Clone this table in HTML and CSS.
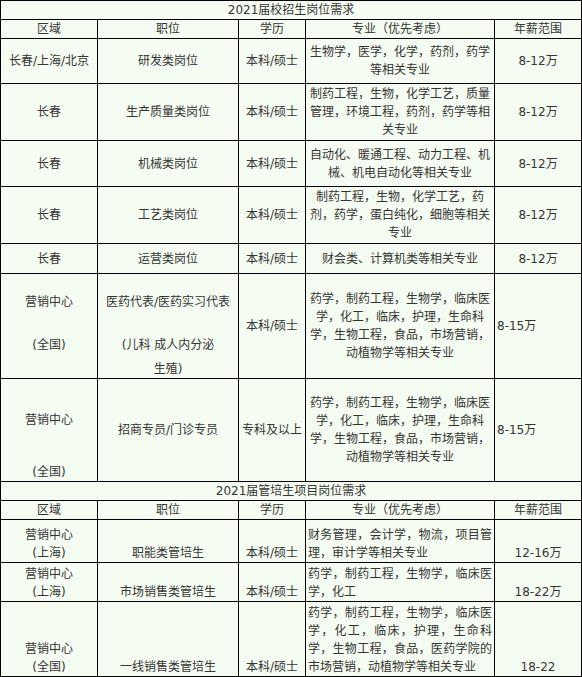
FILE: index.html
```html
<!DOCTYPE html>
<html lang="zh-CN">
<head>
<meta charset="utf-8">
<title>2021届校招生岗位需求</title>
<link rel="stylesheet" href="styles.css">
</head>
<body>
<table class="jobs">
  <colgroup>
    <col class="c-area">
    <col class="c-pos">
    <col class="c-edu">
    <col class="c-major">
    <col class="c-pay">
  </colgroup>
  <tbody>
    <tr class="h19"><td colspan="5" class="title">2021届校招生岗位需求</td></tr>
    <tr class="h19">
      <td>区域</td><td>职位</td><td>学历</td><td>专业（优先考虑）</td><td>年薪范围</td>
    </tr>
    <tr class="h45">
      <td>长春/上海/北京</td><td>研发类岗位</td><td>本科/硕士</td>
      <td>生物学，医学，化学，药剂，药学<br>等相关专业</td><td>8-12万</td>
    </tr>
    <tr class="h57">
      <td>长春</td><td>生产质量类岗位</td><td>本科/硕士</td>
      <td>制药工程，生物，化学工艺，质量<br>管理，环境工程，药剂，药学等相<br>关专业</td><td>8-12万</td>
    </tr>
    <tr class="h46">
      <td>长春</td><td>机械类岗位</td><td>本科/硕士</td>
      <td>自动化、暖通工程、动力工程、机<br>械、机电自动化等相关专业</td><td>8-12万</td>
    </tr>
    <tr class="h57">
      <td>长春</td><td>工艺类岗位</td><td>本科/硕士</td>
      <td>制药工程，生物，化学工艺，药<br>剂，药学，蛋白纯化，细胞等相关<br>专业</td><td>8-12万</td>
    </tr>
    <tr class="h30">
      <td>长春</td><td>运营类岗位</td><td>本科/硕士</td>
      <td>财会类、计算机类等相关专业</td><td>8-12万</td>
    </tr>
    <tr class="h105">
      <td class="top"><div class="l r6a">营销中心</div><div class="l r6b">(全国)</div></td>
      <td class="top"><div class="l r6a">医药代表/医药实习代表</div><div class="l r6b">(儿科 成人内分泌</div><div class="l r6c">生殖)</div></td>
      <td>本科/硕士</td>
      <td>药学，制药工程，生物学，临床医<br>学，化工，临床，护理，生命科<br>学，生物工程，食品，市场营销，<br>动植物学等相关专业</td>
      <td class="left">8-15万</td>
    </tr>
    <tr class="h103">
      <td class="top"><div class="l r7a">营销中心</div><div class="l r7b">(全国)</div></td>
      <td>招商专员/门诊专员</td>
      <td>专科及以上</td>
      <td>药学，制药工程，生物学，临床医<br>学，化工，临床，护理，生命科<br>学，生物工程，食品，市场营销，<br>动植物学等相关专业</td>
      <td class="left">8-15万</td>
    </tr>
    <tr class="h19"><td colspan="5" class="title">2021届管培生项目岗位需求</td></tr>
    <tr class="h19">
      <td>区域</td><td>职位</td><td>学历</td><td>专业（优先考虑）</td><td>年薪范围</td>
    </tr>
    <tr class="h43 bottom">
      <td>营销中心<br>(上海)</td><td>职能类管培生</td><td>本科/硕士</td>
      <td class="just"><span class="jl">财务管理，会计学，物流，项目管</span>理，审计学等相关专业</td>
      <td>12-16万</td>
    </tr>
    <tr class="h39 bottom">
      <td>营销中心<br>(上海)</td><td>市场销售类管培生</td><td>本科/硕士</td>
      <td class="just"><span class="jl">药学，制药工程，生物学，临床医</span>学，化工</td>
      <td>18-22万</td>
    </tr>
    <tr class="h75 bottom">
      <td>营销中心<br>(全国)</td><td>一线销售类管培生</td><td>本科/硕士</td>
      <td class="just"><span class="jl">药学，制药工程，生物学，临床医</span><span class="jl">学，化工，临床，护理，生命科</span><span class="jl">学，生物工程，食品，医药学院的</span>市场营销，动植物学等相关专业</td>
      <td>18-22</td>
    </tr>
  </tbody>
</table>
</body>
</html>
```

FILE: styles.css
```css
html, body {
  margin: 0;
  padding: 0;
  background: #f5fcf1;
}

.jobs {
  border-collapse: collapse;
  table-layout: fixed;
  width: 581px;
  background: #f5fcf1;
  color: #353535;
  font-family: "DejaVu Sans", "Noto Sans CJK SC", sans-serif;
  font-size: 12px;
  line-height: 18px;
}

.c-area { width: 97px; }
.c-pos { width: 141px; }
.c-edu { width: 67px; }
.c-major { width: 189px; }
.c-pay { width: 87px; }

.jobs td {
  border: 1px solid #000;
  padding: 0 2px;
  text-align: center;
  vertical-align: middle;
  white-space: nowrap;
  overflow: hidden;
}

.h19 { height: 19px; }
.h30 { height: 30px; }
.h39 { height: 39px; }
.h43 { height: 43px; }
.h45 { height: 45px; }
.h46 { height: 46px; }
.h57 { height: 57px; }
.h75 { height: 75px; }
.h103 { height: 103px; }
.h105 { height: 105px; }

.jobs td.title { text-align: center; }

.jobs td.left { text-align: left; }

.jobs td.top { vertical-align: top; }

.bottom td { vertical-align: bottom; }

.jobs td.just { text-align: left; }

.jl {
  display: block;
  text-align: justify;
  text-align-last: justify;
}

.l { display: block; }

.r6a { margin-top: 19px; }
.r6b { margin-top: 25px; }
.r6c { margin-top: 6px; }

.r7a { margin-top: 32px; }
.r7b { margin-top: 34px; }
```
